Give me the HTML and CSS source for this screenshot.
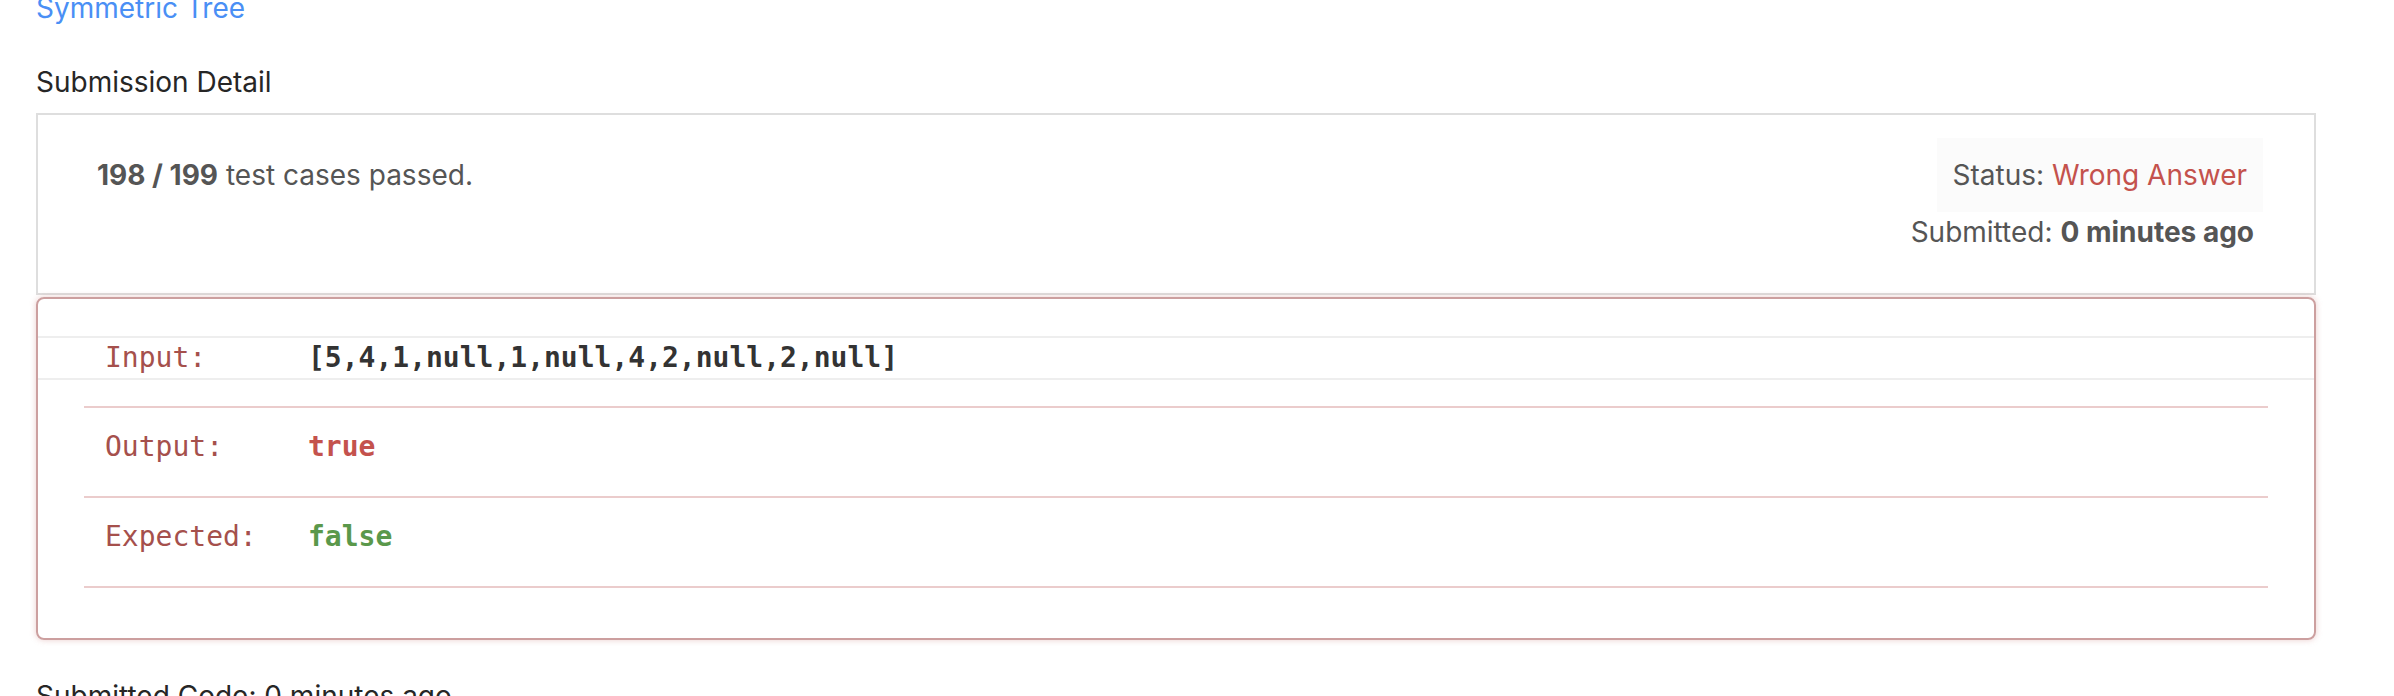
FILE: index.html
```html
<!DOCTYPE html>
<html>
<head>
<meta charset="utf-8">
<title>Submission Detail</title>
<link rel="stylesheet" href="styles.css">
</head>
<body>
<div class="page">
  <a class="problem-link">Symmetric Tree</a>
  <h3 class="section-title">Submission Detail</h3>
  <div class="summary">
    <div class="progress"><b>198 / 199</b> test cases passed.</div>
    <div class="meta">
      <div class="status">Status: <span class="wrong">Wrong Answer</span></div>
      <div class="submitted">Submitted: <b>0 minutes ago</b></div>
    </div>
  </div>
  <div class="result">
    <div class="input-row"><span class="label">Input:</span><span class="value input-value">[5,4,1,null,1,null,4,2,null,2,null]</span></div>
    <div class="compare">
      <div class="compare-row"><span class="label">Output:</span><span class="value out">true</span></div>
      <div class="compare-row"><span class="label">Expected:</span><span class="value exp">false</span></div>
    </div>
  </div>
  <h3 class="section-title code-title">Submitted Code: 0 minutes ago</h3>
</div>
</body>
</html>
```

FILE: styles.css
```css
html, body {
  margin: 0;
  background: #ffffff;
}
body {
  font-family: Inter, "Noto Sans", sans-serif;
  font-size: 28px;
  line-height: 40px;
  color: #333333;
  overflow: hidden;
}
.page {
  padding: 0 78px 0 36px;
}
.problem-link {
  display: block;
  margin-top: -12px;
  color: #4a8ff5;
  text-decoration: none;
}
.section-title {
  margin: 34px 0 11px;
  font-size: 28px;
  font-weight: 400;
  line-height: 40px;
  color: #262626;
}
.summary {
  border: 2px solid #dedede;
  display: flex;
  justify-content: space-between;
  align-items: flex-start;
  padding: 23px 51px 41px 59px;
  color: #555555;
}
.summary b {
  font-weight: 700;
}
.progress {
  padding-top: 17px;
}
.meta {
  display: flex;
  flex-direction: column;
  align-items: flex-end;
}
.status {
  padding: 17px 16px;
  background: #fbfbfb;
}
.wrong {
  color: #c4524d;
}
.submitted {
  margin-right: 9px;
}
.result {
  margin-top: 2px;
  border: 2px solid #cc9f9f;
  border-radius: 8px;
  box-shadow: 0 0 6px rgba(206, 132, 131, 0.4);
  padding: 37px 0 50px;
  font-family: "DejaVu Sans Mono", "Liberation Mono", monospace;
}
.input-row {
  display: flex;
  border-top: 2px solid #eeeeee;
  border-bottom: 2px solid #eeeeee;
  padding-left: 67px;
}
.compare {
  margin: 26px 46px 0;
}
.compare-row {
  display: flex;
  border-top: 2px solid #ebcccc;
  padding: 19px 0 29px 21px;
}
.compare-row:last-child {
  border-bottom: 2px solid #ebcccc;
}
.label {
  flex: none;
  width: 203px;
  color: #a5504c;
}
.value {
  font-weight: 700;
}
.input-value {
  color: #333333;
}
.out {
  color: #c4524d;
}
.exp {
  color: #5a984b;
}
.code-title {
  margin-top: 36px;
}
```
